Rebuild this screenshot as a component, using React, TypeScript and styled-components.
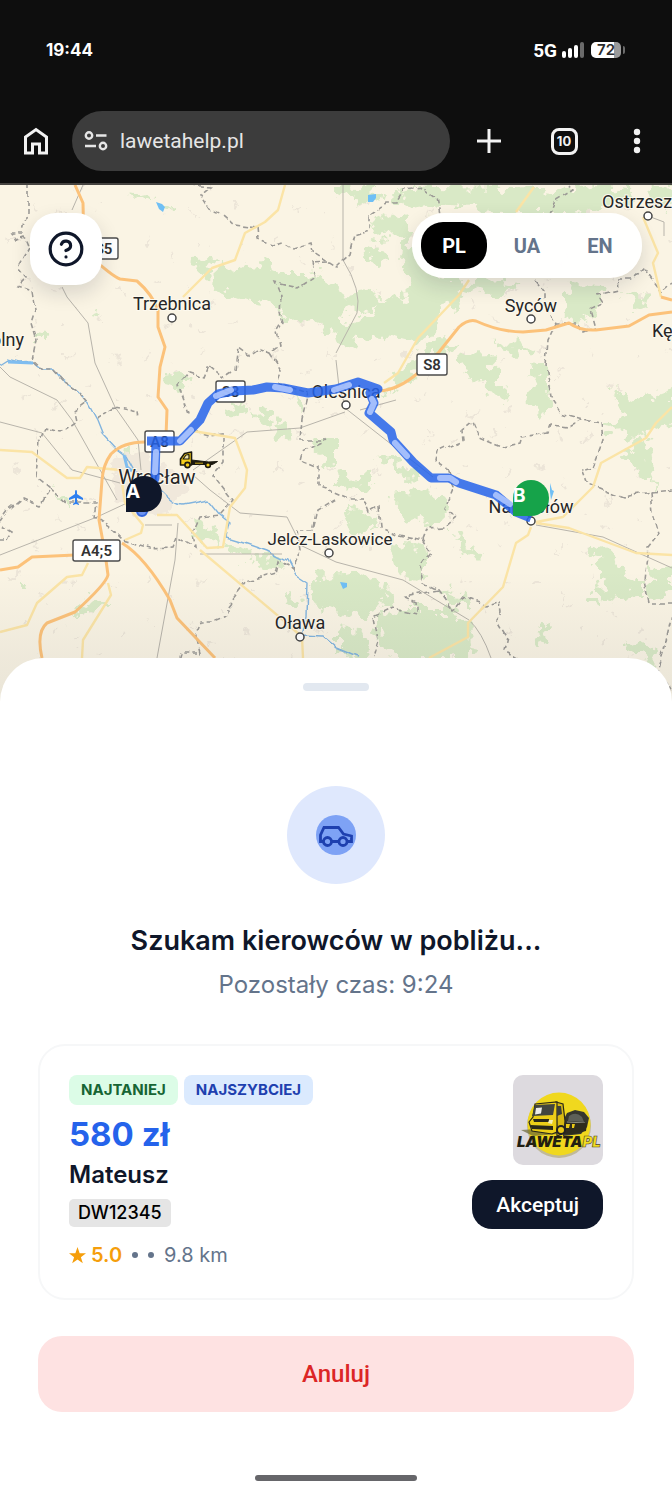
import React, { useState } from 'react';
import styled, { createGlobalStyle } from 'styled-components';
import { CircleQuestionMark } from 'lucide-react';

const GlobalStyle = createGlobalStyle`
  * { box-sizing: border-box; }
  body { margin: 0; background: #ffffff; font-family: Inter, "Liberation Sans", sans-serif; }
  button { border: 0; padding: 0; font: inherit; cursor: pointer; }
  svg { display: block; }
`;

/* ---------- map data ---------- */

const forests = [
  'M217 262L243 270L262 260L283 275L310 275L336 280L350 300L345 320L315 318L290 322L272 302L235 297L216 290Z',
  'M195 257L214 256L215 262L205 266L212 274L204 277L196 266Z',
  'M395 190L430 186L520 187L570 190L600 186L632 188L630 203L600 207L575 214L500 214L470 206L440 203L400 208Z',
  'M404 225L425 268L450 283L500 281L520 286L500 296L470 290L455 300L440 322L420 345L400 340L370 335L345 345L334 333L350 325L375 312L384 298L398 300L410 288L402 270Z',
  'M365 252L378 246L387 260L375 266Z',
  'M365 228L390 215L408 222L402 236L376 238Z',
  'M345 296L372 292L384 304L360 314L346 308Z',
  'M336 186L378 188L384 198L360 206L352 196L336 194Z',
  'M568 283L606 284L603 300L590 318L578 328L565 310Z',
  'M624 293L645 295L650 303L635 308Z',
  'M645 190L672 186L672 212L655 206Z',
  'M388 392L398 368L420 355L435 338L458 342L445 356L430 354L412 378Z',
  'M336 318L346 322L340 340L334 336Z',
  'M497 345L520 342L535 350L515 354Z',
  'M460 357L485 356L500 370L500 385L508 396L490 394L465 375Z',
  'M530 363L548 365L550 402L540 412L527 400L536 380Z',
  'M610 388L640 400L672 388L672 422L640 436L605 430L625 415Z',
  'M638 438L650 440L656 490L644 476L622 452Z',
  'M336 478L370 475L373 484L350 488L336 485Z',
  'M372 455L403 463L420 476L405 477Z',
  'M386 494L415 490L445 500L446 515L425 525L400 510Z',
  'M343 512L370 510L378 525L368 533L345 525Z',
  'M388 556L400 545L430 550L430 562L420 582L400 575Z',
  'M316 575L350 572L385 580L391 603L360 615L315 608L309 590Z',
  'M375 617L400 610L450 610L470 623L475 650L465 662L400 662L378 640Z',
  'M440 588L462 590L464 606L448 606Z',
  'M336 628L362 630L370 646L360 660L336 652Z',
  'M452 533L465 535L468 547L485 555L480 560L460 552Z',
  'M587 540L605 548L620 560L625 575L640 580L640 590L620 603L600 595L602 570L590 555Z',
  'M650 567L672 570L672 592L660 600L645 598Z',
  'M625 645L640 640L658 650L657 670L640 660Z',
  'M537 640L545 620L551 622L542 642Z',
  'M584 596L596 600L596 608L586 604Z',
  'M225 543L250 547L246 561L228 553Z',
  'M252 557L282 558L275 571L258 568Z',
  'M286 594L298 596L297 606L288 603Z',
  'M195 519L214 528L217 545L196 537Z',
  'M270 428L285 423L291 435L278 447Z',
  'M314 438L336 438L336 466L318 457Z',
  'M123 445L135 450L131 460L122 456Z',
  'M167 375L180 372L191 382L180 391L168 388Z',
  'M38 333L46 334L45 343L38 343Z',
  'M92 313L100 315L97 321L90 320Z',
  'M168 203L174 202L174 209L169 212Z',
  'M132 192L152 196L148 200L134 196Z',
  'M226 408L246 402L244 414L232 420Z',
  'M252 412L270 410L278 420L262 424Z',
  'M290 398L306 400L302 410Z',
  'M320 318L336 314L352 326L345 346L330 336Z',
  'M338 478L372 476L372 488L340 490Z',
  'M56 490L70 498L72 506L58 499Z',
  'M74 612L84 608L88 600L106 603L92 612Z',
  'M18 585L28 585L26 588L18 588Z',
];

const borders = [
  'M27 185L27 213L23 233L12 233L16 239L24 236L29 248L18 267L27 278L18 287L32 292L35 310L31 323L36 340L32 360L43 370L53 370L62 380L77 390L87 402L75 411L77 420L60 432L45 428L40 440L37 477L50 488L40 505L22 498L7 510L0 520',
  'M115 407L97 418M115 407L138 412L139 420M50 488L67 503L97 503L95 517L110 527L123 540L150 548L173 547L177 537L195 548L193 533L200 517L220 515L233 500L213 475L223 463L223 433L208 435L192 430',
  'M190 185L210 187L200 195L210 210L222 215L233 225L257 228L258 240L273 245L283 242L293 248L310 243L312 252L328 262L336 267L349 255L354 235L369 230L369 215L386 203L396 203L404 190L424 188L436 197L439 213',
  'M328 262L312 263L315 277L298 288L275 283L281 297L280 313L283 323L277 333L280 345L270 353L257 348L248 355L238 348L235 370L223 378L208 365L203 377L187 372L178 383L190 418',
  'M270 353L281 370L278 383L308 393L302 418L300 440L326 440L302 452L300 460L318 467L318 487L335 492L349 498L363 498L369 513L379 507L381 527L399 535L423 540L428 528L444 527L456 517L446 508L454 488L448 470L436 462L438 452L464 440L463 430L473 422L479 437L503 447L519 443L521 437L548 433L551 425L569 427L583 420L601 423L603 440L593 467L583 470L588 483L623 497L651 492L653 513L659 533L648 547L644 580L649 603L672 603',
  'M423 540L431 553L421 567L424 583L438 590L453 610L463 597L486 605L499 602L501 613L496 620L506 637L503 650L518 658M438 590L406 597L418 603L418 613L393 608L374 617L378 640L373 658',
  'M672 614L666 640L657 670L672 690',
  'M549 213L554 202L574 190L570 185M536 280L544 290L544 305L556 323L576 323L583 332L594 328L589 310L603 303L598 295L619 290L618 280L631 280L643 268L661 292L672 283M556 323L548 340L546 367L553 400L563 415L583 420',
  'M335 500L318 510L313 530L297 530L300 550L292 570L280 560L277 573L247 582L227 607L227 616L213 622L200 622L195 633L200 653L180 653L178 660M651 492L672 490M0 540L8 540L12 532L2 526',
];

const rails = [
  'M83 185L72 210M62 287L67 297L88 323L95 363L115 407L138 440L141 470M0 367L10 377L57 400L72 420L117 500',
  'M0 422L42 433L72 470L120 483M0 555L97 517L127 503M200 554L282 554M178 523L175 560L157 658M145 525L172 525',
  'M193 470L247 432L300 428L345 412M193 475L210 490L240 513L287 517L297 537M336 360L339 387L345 405',
  'M343 185L343 260Q362 290 357 313L336 353M360 410L396 400',
  'M345 408L433 477M300 545L336 562L403 580L469 620Q482 632 491 658M536 525L603 537L672 568M648 216L664 222L664 236',
];

const yellowRoads = [
  'M285 185L278 210L265 222L245 233L235 260L212 268L183 297',
  'M384 383L398 373L418 338L459 295L469 280M516 212L534 187M643 217L658 253L653 263L661 297',
  'M536 522L563 517L593 487L601 463L646 438L656 423L672 407M536 523L569 528L636 553L672 555M531 527L528 535L516 543L503 587L468 623L468 637L429 658',
  'M0 450L32 452L40 458L67 478L80 478L87 467L120 470L125 503L143 525L141 533L125 540M157 515L177 515L207 548L223 547L230 507L245 488L247 470L235 438L187 430',
  'M200 550L283 620L302 637L303 658M0 632L27 625L37 603L67 577L82 575L88 563M108 583L111 595L83 640L82 658',
];

const orangeRoads = [
  'M75 185L83 203L84 250Q110 275 120 279L137 281Q152 294 158 310L158 327L165 347L160 367L158 397L167 410L166 436',
  'M145 442Q123 442 111 454Q103 465 102 480L99 520L105 553L108 575Q106 584 75 612L47 623Q36 632 42 658',
  'M0 570L18 567L32 557L75 555M122 543Q145 557 170 600L177 618L215 658',
  'M379 391Q398 390 418 373L439 352L459 327Q468 319 476 321Q500 332 523 332L546 330L569 323Q580 331 596 330L629 326L649 315L672 312M661 297L672 300',
];

const river =
  'M0 365L8 360L20 363L33 362L43 370L53 370L62 380L77 390L87 402L97 420L103 435L115 448L127 457L133 468L163 492Q175 505 183 505L208 500L220 515L230 523L227 537L247 543L267 550L287 560L295 575L307 583L306 617L302 636L323 637L336 648L358 657';

const route =
  'M142 513L155 478L156 441M147 441L180 441L200 420L208 403L218 394L233 391L253 390L267 387L283 388L308 393L336 389L358 382L378 389L370 393L374 403L369 413L391 432L393 440L413 462L431 478L449 478L459 483L496 495L516 512L531 518';

const routeDashes =
  'M155 472L156 452M180 441L191 430M216 396L231 390M275 387L290 390M334 390L349 385M372 399L374 403L370 412M395 443L407 456M440 478L450 478L456 482M496 495L510 504';

const towns = [
  { name: 'Ostrzeszów', x: 602, y: 208, dotX: 648, dotY: 216, anchor: 'start' },
  { name: 'Trzebnica', x: 172, y: 310, dotX: 172, dotY: 318 },
  { name: 'Syców', x: 531, y: 312, dotX: 531, dotY: 319 },
  { name: 'Oleśnica', x: 346, y: 398, dotX: 346, dotY: 405 },
  { name: 'Jelcz-Laskowice', x: 330, y: 545, dotX: 329, dotY: 553, small: true },
  { name: 'Oława', x: 300, y: 629, dotX: 300, dotY: 637 },
  { name: 'Namysłów', x: 531, y: 513, dotX: 531, dotY: 521 },
  { name: 'Kępno', x: 652, y: 337, anchor: 'start' },
  { name: 'Wołów Dolny', x: 24, y: 346, anchor: 'end' },
] as const;

const shields = [
  { label: 'S5', x: 89, y: 238, w: 29 },
  { label: 'S8', x: 417, y: 354, w: 30 },
  { label: 'S8', x: 216, y: 381, w: 29 },
  { label: 'A8', x: 145, y: 431, w: 29 },
  { label: 'A4;5', x: 73, y: 540, w: 47 },
];

const MapDrawing = () => (
  <MapSvg viewBox="0 185 672 521" preserveAspectRatio="xMidYMin slice" role="img" aria-label="Mapa trasy">
    <defs>
      <filter id="ragged" x="-5%" y="-5%" width="110%" height="110%" colorInterpolationFilters="sRGB">
        <feTurbulence type="fractalNoise" baseFrequency="0.08" numOctaves="3" seed="4" />
        <feDisplacementMap in="SourceGraphic" scale="26" xChannelSelector="R" yChannelSelector="G" />
      </filter>
      <filter id="wobble" x="-5%" y="-5%" width="110%" height="110%" colorInterpolationFilters="sRGB">
        <feTurbulence type="fractalNoise" baseFrequency="0.06" numOctaves="1" seed="9" />
        <feDisplacementMap in="SourceGraphic" scale="9" xChannelSelector="R" yChannelSelector="G" />
      </filter>
      <pattern id="villages" width="131" height="113" patternUnits="userSpaceOnUse">
        <path
          d="M12 14l6-4l1 3l-5 4zM40 30l3 6l-4-1zM70 12l2 7l-4 1zM88 44l5 4l-6 1zM22 58l7-2l-2 4zM56 66l3-5l2 4zM76 74l6 2l-5 2zM110 22l4-5l2 3zM118 64l3 5l-5 2zM98 94l8-3l-1 4zM34 92l4 4l-3 3zM60 102l3-6l2 5z"
          fill="#ece5d8"
        />
      </pattern>
      <linearGradient id="fade" x1="0" y1="0" x2="0" y2="1">
        <stop offset="0" stopColor="#0f172a" stopOpacity="0" />
        <stop offset="0.65" stopColor="#0f172a" stopOpacity="0.05" />
        <stop offset="1" stopColor="#0f172a" stopOpacity="0.07" />
      </linearGradient>
    </defs>

    <rect y="185" width="672" height="521" fill="#faf4e4" />
    <rect y="185" width="672" height="521" fill="url(#villages)" filter="url(#ragged)" />
    <g fill="#d9e9c6" filter="url(#ragged)">
      {forests.map((d) => <path key={d} d={d} />)}
    </g>
    <path d="M112 460l18-10l22 12l32 8l6 20l-22 22l-26 4l-22-14z" fill="#f0e8db" filter="url(#ragged)" />
    <path d="M156 202l6 2l3 3l-2 5l-4-3zM368 195l8-1v4l-3 4h-5zM340 582l7 1v4l-4 2zM550 483l2 7l2 1l-3 9l-1-8z" fill="#6fbff5" />
    <path d={river} fill="none" stroke="#82b4de" strokeWidth="1.4" filter="url(#wobble)" />
    <path d="M8 362L33 363M124 455l3 12l5 4" fill="none" stroke="#7fbdf0" strokeWidth="3" />

    <g fill="none" stroke="#b8b4ab" strokeWidth="1">
      {rails.map((d) => <path key={d} d={d} />)}
    </g>
    <g fill="none" stroke="#9c9a96" strokeWidth="1.6" strokeDasharray="5 3" filter="url(#wobble)">
      {borders.map((d) => <path key={d} d={d} />)}
    </g>
    <g fill="none" stroke="#fbe4a6" strokeWidth="2.4" strokeLinejoin="round">
      {yellowRoads.map((d) => <path key={d} d={d} />)}
    </g>
    <g fill="none" stroke="#fcc27a" strokeWidth="3" strokeLinejoin="round">
      {orangeRoads.map((d) => <path key={d} d={d} />)}
    </g>

    <path
      d="M76 490c1 0 1 1 1 4l6 4v2l-6-2v4l2 2v1l-3-1l-3 1v-1l2-2v-4l-6 2v-2l6-4c0-3 0-4 1-4z"
      fill="#2d7ff0"
    />

    {shields.map((s) => (
      <g key={s.label + s.x}>
        <rect x={s.x} y={s.y} width={s.w} height="21" rx="2" fill="#fff" stroke="#4b4b4b" strokeWidth="1.4" />
        <ShieldText x={s.x + s.w / 2} y={s.y + 16}>{s.label}</ShieldText>
      </g>
    ))}
    {towns.map((t) => (
      <g key={t.name}>
        <TownText x={t.x} y={t.y} $size={'small' in t ? 17 : 18} textAnchor={'anchor' in t ? t.anchor : 'middle'}>
          {t.name}
        </TownText>
        {'dotX' in t && <circle cx={t.dotX} cy={t.dotY} r="4" fill="#fff" stroke="#444" strokeWidth="1.5" />}
      </g>
    ))}
    <TownText x="157" y="484" $size={20} textAnchor="middle">Wrocław</TownText>

    <g fill="none" strokeLinejoin="round">
      <path d={route} stroke="#2563eb" strokeOpacity="0.85" strokeWidth="9" />
      <path d={routeDashes} stroke="#b4caff" strokeOpacity="0.85" strokeWidth="6" strokeLinecap="round" />
    </g>
    <circle cx="142" cy="511" r="5" fill="#6d93ee" stroke="#3566dd" strokeWidth="2" />

    {/* tow truck */}
    <g stroke="#1c1a10" strokeLinejoin="round">
      <path d="M180.500 464v-5l4-5.500l7-1.500v13h-11z" fill="#f5cd1b" strokeWidth="1.600" />
      <path d="M183 459l3-4l3-0.500v4.500z" fill="#f0e6b0" strokeWidth="1.200" />
      <path d="M191.500 460l17 2l9-0.500l-5 3h-21z" fill="#1c1a10" strokeWidth="1" />
      <path d="M195 463.200h8" stroke="#f5cd1b" strokeWidth="0.8" />
      <circle cx="187.500" cy="465" r="2.600" fill="#f5cd1b" strokeWidth="1.600" />
      <circle cx="208" cy="465" r="2.400" fill="#f5cd1b" strokeWidth="1.600" />
    </g>

    <path d="M126 512V494A18 18 0 1 1 144 512Z" fill="#0f172a" />
    <PinText x="126" y="498">A</PinText>
    <path d="M513 516V498A18 18 0 1 1 531 516Z" fill="#16a34a" />
    <PinText x="513" y="502">B</PinText>

    <rect y="570" width="672" height="136" fill="url(#fade)" />
  </MapSvg>
);

const CompanyLogo = () => (
  <LogoSvg viewBox="0 0 90 90" role="img" aria-label="Laweta PL">
    <rect width="90" height="90" fill="#dddadf" />
    <circle cx="46" cy="51" r="32" fill="#a59a52" opacity="0.5" />
    <circle cx="46" cy="49" r="31.500" fill="#f0d81e" />
    <path d="M8 55l16-1l2-3l48 0l-4 6l-50 4z" fill="#6b6634" opacity="0.7" />
    <path d="M50 46l4-8l8-3l9 2l5 6l-2 9l-6 7l-18 2z" fill="#35362e" />
    <path d="M56 41q7-5 13 1l2 5l-16-1z" fill="#5d6058" />
    <path d="M54 47l18 1" stroke="#8b8c80" strokeWidth="1" />
    <path d="M43 27l7 2l2 17l-1 12l-7 3z" fill="#d8ba12" stroke="#2a2819" strokeWidth="1.200" />
    <path d="M22 29l22-2l0 17l0 13l-5 2l-20-3l-3-9l4-5z" fill="#ecce18" stroke="#2a2819" strokeWidth="1.200" />
    <path d="M22 30l20-1l-2 11l-21 1z" fill="#42453f" />
    <path d="M23 33l6-0.500l-1 6l-6 1z" fill="#ecebe8" />
    <path d="M44 31l4 0l1 8l-5 2z" fill="#3c3f39" />
    <path d="M20 44h16v3H21zM17 50l23 1v4l-21-1z" fill="#2a2819" />
    <path d="M36 45l4 0l-1 4l-4-1z" fill="#f7efb8" />
    <path d="M52 48h22l-1 8l-12 3h-10z" fill="#2e2c1d" />
    <path d="M53 49l4 0l-1 4l-3 0zM59 49l3 0l-1 4h-2z" fill="#e9c915" />
    <circle cx="48" cy="55" r="4" fill="#e9c915" stroke="#222" strokeWidth="2" />
    <LogoText x="4" y="72">LAWETA<tspan fill="#f2dd23" stroke="#4e4714" strokeWidth="0.6">PL</tspan></LogoText>
  </LogoSvg>
);

const languages = ['PL', 'UA', 'EN'];

const App = () => {
  const [lang, setLang] = useState('PL');

  return (
    <Page>
      <GlobalStyle />
      <StatusBar>
        <Clock>19:44</Clock>
        <StatusIcons>
          <Network>5G</Network>
          <svg width="22" height="16" viewBox="0 0 22 16" fill="#fff">
            <rect y="9" width="4" height="7" rx="2" />
            <rect x="6" y="6" width="4" height="10" rx="2" />
            <rect x="12" y="3" width="4" height="13" rx="2" />
            <rect x="18" width="4" height="16" rx="2" fill="#6b6b6b" />
          </svg>
          <Battery>72</Battery>
        </StatusIcons>
      </StatusBar>

      <BrowserBar>
        <BarButton aria-label="Strona główna">
          <svg width="24" height="28" viewBox="0 0 24 28" fill="none" stroke="#f2f2f2" strokeWidth="3">
            <path d="M1.500 26V10L12 2.500l10.500 7.500V26H15.500V17H8.500V26Z" />
          </svg>
        </BarButton>
        <AddressBar>
          <svg width="24" height="20" viewBox="0 0 24 20" fill="none" stroke="#e6e6e6" strokeWidth="2.400">
            <circle cx="5" cy="4.500" r="3.200" />
            <path d="M12 4.500h10.500M1 15h11" />
            <circle cx="19" cy="15" r="3.200" />
          </svg>
          <AddressInput aria-label="Adres" defaultValue="lawetahelp.pl" />
        </AddressBar>
        <BarButton aria-label="Nowa karta">
          <svg width="24" height="24" viewBox="0 0 24 24" stroke="#f2f2f2" strokeWidth="3">
            <path d="M12 0v24M0 12h24" />
          </svg>
        </BarButton>
        <BarButton aria-label="Karty">
          <TabCount>10</TabCount>
        </BarButton>
        <BarButton aria-label="Menu">
          <svg width="8" height="26" viewBox="0 0 8 26" fill="#f2f2f2">
            <circle cx="4" cy="4" r="3.200" />
            <circle cx="4" cy="13" r="3.200" />
            <circle cx="4" cy="22" r="3.200" />
          </svg>
        </BarButton>
      </BrowserBar>

      <MapArea>
        <MapDrawing />
        <MapControls>
          <HelpButton aria-label="Pomoc">
            <CircleQuestionMark size={38} strokeWidth={2} />
          </HelpButton>
          <LanguageSwitch>
            {languages.map((l) => (
              <LanguageButton key={l} $active={l === lang} onClick={() => setLang(l)}>{l}</LanguageButton>
            ))}
          </LanguageSwitch>
        </MapControls>
      </MapArea>

      <Sheet>
        <Handle />
        <Pulse>
          <PulseCore>
            <svg width="36" height="24" viewBox="0 0 36 24" fill="none" stroke="#1e40af" strokeWidth="2.800" strokeLinejoin="miter">
              <path d="M5 18.500H2.500V12L6 4.500H20.500L25.500 11L33.500 13V18.500H30M14 18.500H21" />
              <circle cx="9.500" cy="18.500" r="4" />
              <circle cx="25" cy="18.500" r="4" />
            </svg>
          </PulseCore>
        </Pulse>
        <Title>Szukam kierowców w pobliżu...</Title>
        <Subtitle>Pozostały czas: 9:24</Subtitle>

        <OfferCard>
          <OfferInfo>
            <Tags>
              <Tag $tone="green">NAJTANIEJ</Tag>
              <Tag $tone="blue">NAJSZYBCIEJ</Tag>
            </Tags>
            <Price>580 zł</Price>
            <DriverName>Mateusz</DriverName>
            <Plate>DW12345</Plate>
            <Meta>
              <svg width="17" height="17" viewBox="0 0 24 24" fill="#f59e0b">
                <path d="M12 0l3 8.800h9l-7.200 5.500L19.500 23L12 17.700L4.500 23l2.700-8.700L0 8.800h9z" />
              </svg>
              <Rating>5.0</Rating>
              <Dot />
              <Dot />
              <span>9.8 km</span>
            </Meta>
          </OfferInfo>
          <OfferSide>
            <CompanyLogo />
            <AcceptButton>Akceptuj</AcceptButton>
          </OfferSide>
        </OfferCard>

        <CancelButton>Anuluj</CancelButton>
        <HomeIndicator />
      </Sheet>
    </Page>
  );
};

const Page = styled.div`
  display: flex;
  flex-direction: column;
  min-height: 100vh;
`;

/* ---------- phone chrome ---------- */

const StatusBar = styled.header`
  display: flex;
  justify-content: space-between;
  align-items: center;
  height: 100px;
  padding: 0 51px 0 46px;
  background: #0e0e0e;
  color: #ffffff;
`;

const Clock = styled.span`
  font-size: 17px;
  font-weight: 700;
`;

const StatusIcons = styled.div`
  display: flex;
  align-items: center;
  gap: 7px;
`;

const Network = styled.span`
  margin-right: -2px;
  font-family: Roboto, sans-serif;
  font-size: 19px;
  font-weight: 700;
`;

const Battery = styled.div`
  position: relative;
  width: 30px;
  height: 16px;
  border-radius: 5px;
  background: linear-gradient(90deg, #ffffff 76%, #9a9a9a 76%);
  color: #2b2b2b;
  font-size: 15px;
  font-weight: 600;
  line-height: 16px;
  text-align: center;

  &::after {
    content: '';
    position: absolute;
    left: 32px;
    top: 4px;
    width: 2px;
    height: 8px;
    border-radius: 0 2px 2px 0;
    background: #6b6b6b;
  }
`;

const BrowserBar = styled.nav`
  display: grid;
  grid-template-columns: 72px 1fr 77px 74px 71px;
  align-items: center;
  padding: 11px 0 12px;
  background: #0e0e0e;
  border-bottom: 2px solid #454340;
`;

const BarButton = styled.button`
  display: flex;
  align-items: center;
  justify-content: center;
  height: 60px;
  background: transparent;
`;

const AddressBar = styled.div`
  display: flex;
  align-items: center;
  gap: 12px;
  height: 60px;
  padding: 0 12px;
  border-radius: 30px;
  background: #3c3c3c;
`;

const AddressInput = styled.input`
  flex: 1;
  min-width: 0;
  padding: 0;
  border: 0;
  outline: 0;
  background: transparent;
  color: #e6e6e6;
  font-family: Roboto, sans-serif;
  font-size: 21px;
`;

const TabCount = styled.span`
  width: 27px;
  height: 27px;
  border: 3px solid #f2f2f2;
  border-radius: 8px;
  color: #f2f2f2;
  font-size: 13px;
  font-weight: 700;
  line-height: 21px;
  text-align: center;
`;

/* ---------- map ---------- */

const MapArea = styled.section`
  position: relative;
`;

const MapSvg = styled.svg`
  width: 100%;
  height: 521px;
`;

const MapControls = styled.div`
  position: absolute;
  inset: 28px 30px auto;
  display: flex;
  justify-content: space-between;
  align-items: flex-start;
`;

const TownText = styled.text<{ $size: number }>`
  font-family: Roboto, sans-serif;
  font-size: ${props => props.$size}px;
  fill: #262626;
  stroke: #fdf9ee;
  stroke-width: 2px;
  paint-order: stroke;
`;

const ShieldText = styled.text`
  font-family: Roboto, sans-serif;
  font-size: 15px;
  font-weight: 600;
  text-anchor: middle;
  fill: #333333;
`;

const PinText = styled.text`
  font-family: Inter, sans-serif;
  font-size: 19px;
  font-weight: 700;
  fill: #ffffff;
`;

const HelpButton = styled.button`
  display: flex;
  align-items: center;
  justify-content: center;
  width: 72px;
  height: 72px;
  border-radius: 26px;
  background: #ffffff;
  color: #0f172a;
  box-shadow: 0 8px 20px rgba(15, 23, 42, 0.14);
`;

const LanguageSwitch = styled.div`
  display: grid;
  grid-template-columns: repeat(3, 66px);
  gap: 7px;
  padding: 9px;
  border-radius: 32px;
  background: rgba(255, 255, 255, 0.96);
  box-shadow: 0 8px 20px rgba(15, 23, 42, 0.14);
`;

const LanguageButton = styled.button<{ $active: boolean }>`
  height: 47px;
  border-radius: 22px;
  background: ${props => props.$active ? '#000000' : 'transparent'};
  color: ${props => props.$active ? '#ffffff' : '#64748b'};
  font-family: Roboto, sans-serif;
  font-size: 20px;
  font-weight: 700;
`;

/* ---------- bottom sheet ---------- */

const Sheet = styled.main`
  position: relative;
  display: flex;
  flex-direction: column;
  align-items: center;
  flex: 1;
  margin-top: -48px;
  padding: 25px 38px 15px;
  border-radius: 44px 44px 0 0;
  background: #ffffff;
`;

const Handle = styled.div`
  width: 66px;
  height: 8px;
  border-radius: 4px;
  background: #e2e8f0;
`;

const Pulse = styled.div`
  display: flex;
  align-items: center;
  justify-content: center;
  width: 98px;
  height: 98px;
  margin-top: 95px;
  border-radius: 50%;
  background: #dfe8fd;
`;

const PulseCore = styled.div`
  display: flex;
  align-items: center;
  justify-content: center;
  width: 40px;
  height: 40px;
  border-radius: 50%;
  background: #7ea2f5;
`;

const Title = styled.h1`
  margin: 40px 0 0;
  color: #0f172a;
  font-size: 27px;
  font-weight: 600;
  line-height: 34px;
`;

const Subtitle = styled.p`
  margin: 12px 0 0;
  color: #64748b;
  font-size: 24px;
  line-height: 30px;
`;

const OfferCard = styled.article`
  display: flex;
  justify-content: space-between;
  align-items: flex-start;
  align-self: stretch;
  margin-top: 44px;
  padding: 29px 29px 31px;
  border: 2px solid #f6f7f8;
  border-radius: 27px;
`;

const OfferInfo = styled.div`
  display: flex;
  flex-direction: column;
  align-items: flex-start;
`;

const Tags = styled.div`
  display: flex;
  gap: 6px;
`;

const Tag = styled.span<{ $tone: 'green' | 'blue' }>`
  padding: 0 12px;
  border-radius: 8px;
  background: ${props => props.$tone === 'green' ? '#dcfce7' : '#dbeafe'};
  color: ${props => props.$tone === 'green' ? '#166534' : '#1e40af'};
  font-size: 15px;
  font-weight: 700;
  line-height: 30px;
`;

const Price = styled.strong`
  margin-top: 8px;
  color: #2563eb;
  font-size: 33px;
  font-weight: 700;
  line-height: 42px;
`;

const DriverName = styled.h2`
  margin: 4px 0 0;
  color: #0f172a;
  font-size: 24px;
  font-weight: 600;
  line-height: 32px;
`;

const Plate = styled.span`
  margin-top: 8px;
  padding: 0 9px;
  border-radius: 5px;
  background: #e5e5e5;
  color: #000000;
  font-size: 18px;
  font-weight: 500;
  line-height: 28px;
`;

const Meta = styled.div`
  display: flex;
  align-items: center;
  gap: 10px;
  margin-top: 16px;
  color: #64748b;
  font-size: 20px;
  line-height: 24px;

  svg { margin-right: -5px; }
`;

const Rating = styled.span`
  color: #f59e0b;
  font-weight: 600;
`;

const Dot = styled.i`
  width: 6px;
  height: 6px;
  border-radius: 50%;
  background: #64748b;
`;

const OfferSide = styled.div`
  display: flex;
  flex-direction: column;
  align-items: flex-end;
  gap: 15px;
`;

const LogoSvg = styled.svg`
  width: 90px;
  height: 90px;
  border-radius: 10px;
`;

const LogoText = styled.text`
  font-family: Inter, sans-serif;
  font-size: 15px;
  font-weight: 900;
  font-style: italic;
  fill: #221f12;
`;

const AcceptButton = styled.button`
  height: 49px;
  padding: 0 24px;
  border-radius: 20px;
  background: #0f172a;
  color: #ffffff;
  font-family: Roboto, sans-serif;
  font-size: 21px;
  font-weight: 500;
`;

const CancelButton = styled.button`
  align-self: stretch;
  height: 76px;
  margin-top: 36px;
  border-radius: 24px;
  background: #fee2e2;
  color: #dc2626;
  font-family: Roboto, sans-serif;
  font-size: 24px;
  font-weight: 500;
`;

const HomeIndicator = styled.div`
  width: 162px;
  height: 6px;
  margin-top: auto;
  border-radius: 3px;
  background: #66666a;
`;

export default App;
